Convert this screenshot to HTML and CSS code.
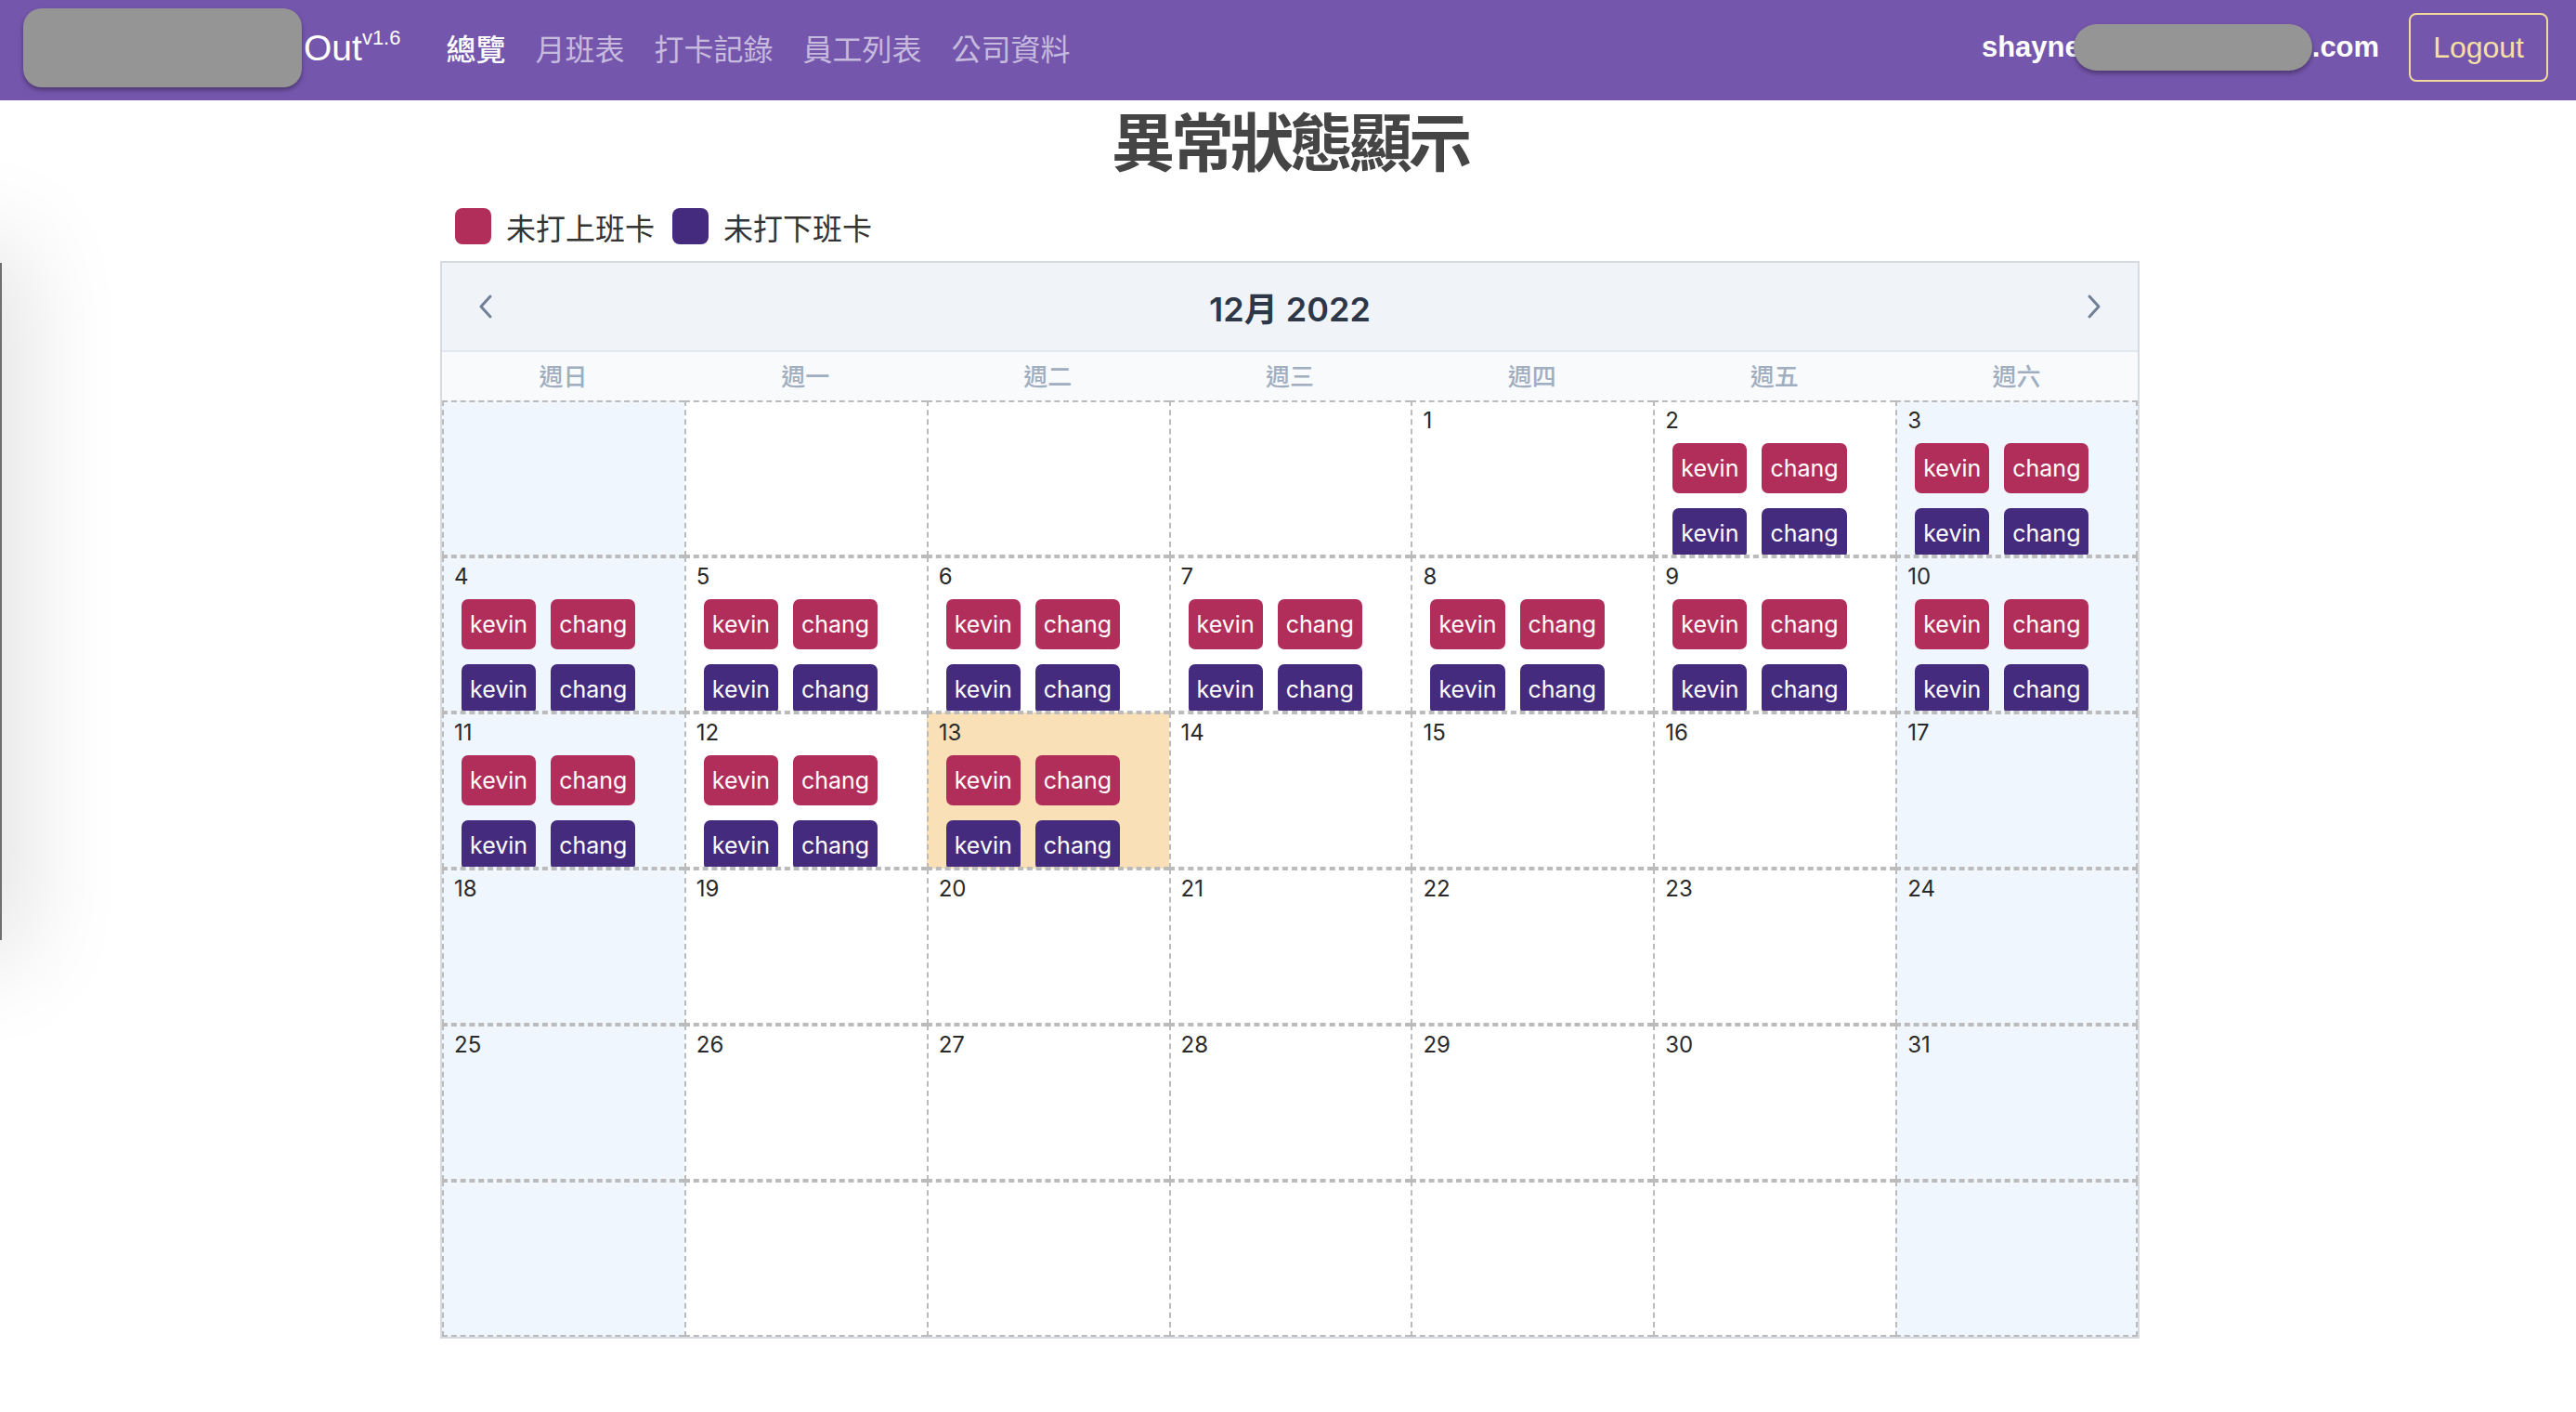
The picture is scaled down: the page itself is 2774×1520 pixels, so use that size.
FILE: index.html
```html
<!DOCTYPE html>
<html lang="zh-Hant">
<head>
<meta charset="utf-8">
<title>異常狀態顯示</title>
<link rel="stylesheet" href="styles.css">
</head>
<body>
<header class="navbar">
  <div class="brand">
    <span class="redact redact-logo"></span>
    <span class="brand-name">Out<span class="ver">v1.6</span></span>
  </div>
  <nav class="nav">
    <a class="nav-link active" href="#">總覽</a>
    <a class="nav-link" href="#">月班表</a>
    <a class="nav-link" href="#">打卡記錄</a>
    <a class="nav-link" href="#">員工列表</a>
    <a class="nav-link" href="#">公司資料</a>
  </nav>
  <div class="account">
    <span class="email">shayne<span class="redact redact-email"></span>.com</span>
    <button class="logout">Logout</button>
  </div>
</header>

<main class="page">
  <h1 class="title">異常狀態顯示</h1>
  <div class="legend">
    <span class="legend-swatch in"></span><span class="legend-label">未打上班卡</span>
    <span class="legend-swatch out"></span><span class="legend-label">未打下班卡</span>
  </div>

  <section class="calendar">
    <div class="cal-head">
      <button class="cal-nav" aria-label="prev"><svg width="18" height="28" viewBox="0 0 18 28"><polyline points="14,3 4,14 14,25" fill="none" stroke="#718096" stroke-width="3" stroke-linecap="round" stroke-linejoin="round"/></svg></button>
      <h2 class="cal-month">12月 2022</h2>
      <button class="cal-nav" aria-label="next"><svg width="18" height="28" viewBox="0 0 18 28"><polyline points="4,3 14,14 4,25" fill="none" stroke="#718096" stroke-width="3" stroke-linecap="round" stroke-linejoin="round"/></svg></button>
    </div>
    <div class="cal-weekdays">
      <div class="weekday">週日</div>
      <div class="weekday">週一</div>
      <div class="weekday">週二</div>
      <div class="weekday">週三</div>
      <div class="weekday">週四</div>
      <div class="weekday">週五</div>
      <div class="weekday">週六</div>
    </div>
    <div class="cal-grid">
      <!-- row 1 -->
      <div class="cell weekend"></div>
      <div class="cell"></div>
      <div class="cell"></div>
      <div class="cell"></div>
      <div class="cell"><div class="day">1</div></div>
      <div class="cell"><div class="day">2</div>
        <div class="chip-row"><span class="chip in">kevin</span><span class="chip in">chang</span></div>
        <div class="chip-row"><span class="chip out">kevin</span><span class="chip out">chang</span></div></div>
      <div class="cell weekend"><div class="day">3</div>
        <div class="chip-row"><span class="chip in">kevin</span><span class="chip in">chang</span></div>
        <div class="chip-row"><span class="chip out">kevin</span><span class="chip out">chang</span></div></div>
      <!-- row 2 -->
      <div class="cell weekend"><div class="day">4</div>
        <div class="chip-row"><span class="chip in">kevin</span><span class="chip in">chang</span></div>
        <div class="chip-row"><span class="chip out">kevin</span><span class="chip out">chang</span></div></div>
      <div class="cell"><div class="day">5</div>
        <div class="chip-row"><span class="chip in">kevin</span><span class="chip in">chang</span></div>
        <div class="chip-row"><span class="chip out">kevin</span><span class="chip out">chang</span></div></div>
      <div class="cell"><div class="day">6</div>
        <div class="chip-row"><span class="chip in">kevin</span><span class="chip in">chang</span></div>
        <div class="chip-row"><span class="chip out">kevin</span><span class="chip out">chang</span></div></div>
      <div class="cell"><div class="day">7</div>
        <div class="chip-row"><span class="chip in">kevin</span><span class="chip in">chang</span></div>
        <div class="chip-row"><span class="chip out">kevin</span><span class="chip out">chang</span></div></div>
      <div class="cell"><div class="day">8</div>
        <div class="chip-row"><span class="chip in">kevin</span><span class="chip in">chang</span></div>
        <div class="chip-row"><span class="chip out">kevin</span><span class="chip out">chang</span></div></div>
      <div class="cell"><div class="day">9</div>
        <div class="chip-row"><span class="chip in">kevin</span><span class="chip in">chang</span></div>
        <div class="chip-row"><span class="chip out">kevin</span><span class="chip out">chang</span></div></div>
      <div class="cell weekend"><div class="day">10</div>
        <div class="chip-row"><span class="chip in">kevin</span><span class="chip in">chang</span></div>
        <div class="chip-row"><span class="chip out">kevin</span><span class="chip out">chang</span></div></div>
      <!-- row 3 -->
      <div class="cell weekend"><div class="day">11</div>
        <div class="chip-row"><span class="chip in">kevin</span><span class="chip in">chang</span></div>
        <div class="chip-row"><span class="chip out">kevin</span><span class="chip out">chang</span></div></div>
      <div class="cell"><div class="day">12</div>
        <div class="chip-row"><span class="chip in">kevin</span><span class="chip in">chang</span></div>
        <div class="chip-row"><span class="chip out">kevin</span><span class="chip out">chang</span></div></div>
      <div class="cell today"><div class="day">13</div>
        <div class="chip-row"><span class="chip in">kevin</span><span class="chip in">chang</span></div>
        <div class="chip-row"><span class="chip out">kevin</span><span class="chip out">chang</span></div></div>
      <div class="cell"><div class="day">14</div></div>
      <div class="cell"><div class="day">15</div></div>
      <div class="cell"><div class="day">16</div></div>
      <div class="cell weekend"><div class="day">17</div></div>
      <!-- row 4 -->
      <div class="cell weekend"><div class="day">18</div></div>
      <div class="cell"><div class="day">19</div></div>
      <div class="cell"><div class="day">20</div></div>
      <div class="cell"><div class="day">21</div></div>
      <div class="cell"><div class="day">22</div></div>
      <div class="cell"><div class="day">23</div></div>
      <div class="cell weekend"><div class="day">24</div></div>
      <!-- row 5 -->
      <div class="cell weekend"><div class="day">25</div></div>
      <div class="cell"><div class="day">26</div></div>
      <div class="cell"><div class="day">27</div></div>
      <div class="cell"><div class="day">28</div></div>
      <div class="cell"><div class="day">29</div></div>
      <div class="cell"><div class="day">30</div></div>
      <div class="cell weekend"><div class="day">31</div></div>
      <!-- row 6 -->
      <div class="cell weekend"></div>
      <div class="cell"></div>
      <div class="cell"></div>
      <div class="cell"></div>
      <div class="cell"></div>
      <div class="cell"></div>
      <div class="cell weekend"></div>
    </div>
  </section>
</main>

<div class="drawer-edge"></div>
</body>
</html>
```

FILE: styles.css
```css
* { box-sizing: border-box; }

body {
  margin: 0;
  background: #ffffff;
  font-family: "Inter", "Noto Sans CJK TC", sans-serif;
  color: #333333;
}

/* ---------- navbar ---------- */
.navbar {
  height: 108px;
  background: #7556ad;
  display: flex;
  align-items: center;
  padding: 0 30px 6px 25px;
  font-family: "Liberation Sans", "Noto Sans CJK TC", sans-serif;
}

.brand {
  display: flex;
  align-items: center;
}

.redact {
  display: inline-block;
  background: #959595;
  box-shadow: 0 3px 5px rgba(0, 0, 0, 0.35);
}

.redact-logo {
  width: 300px;
  height: 85px;
  border-radius: 20px;
  margin-top: 1px;
}

.brand-name {
  color: #ffffff;
  font-size: 39px;
  margin-left: 2px;
}

.ver {
  font-size: 22px;
  vertical-align: 17px;
}

.nav {
  display: flex;
  gap: 32px;
  margin-left: 49px;
}

.nav-link {
  font-size: 32px;
  color: rgba(255, 255, 255, 0.6);
  text-decoration: none;
}

.nav-link.active {
  color: #ffffff;
  font-weight: 500;
}

.account {
  margin-left: auto;
  display: flex;
  align-items: center;
  gap: 32px;
}

.email {
  display: flex;
  align-items: center;
  color: #ffffff;
  font-size: 31px;
  font-weight: 700;
}

.redact-email {
  width: 257px;
  height: 50px;
  border-radius: 25px;
  margin-left: -8px;
}

.logout {
  height: 74px;
  padding: 0 24px;
  border: 2px solid #f1d99b;
  border-radius: 8px;
  background: transparent;
  color: #f7e0a3;
  font-family: "Liberation Sans", sans-serif;
  font-size: 32px;
}

/* ---------- page ---------- */
.page {
  width: 1830px;
  margin: 0 0 0 calc(50% - 913px);
}

.title {
  margin: 4px 0 0;
  text-align: center;
  font-family: "Noto Sans CJK TC", sans-serif;
  font-size: 68px;
  line-height: 76px;
  letter-spacing: -4px;
  font-weight: 700;
  color: #454545;
}

.legend {
  display: flex;
  align-items: center;
  height: 39px;
  margin-top: 36px;
  padding-left: 16px;
  font-family: "Noto Sans CJK TC", sans-serif;
  font-size: 32px;
  color: #333333;
}

.legend-swatch {
  width: 39px;
  height: 39px;
  border-radius: 8px;
  margin-right: 16px;
}

.legend-label + .legend-swatch {
  margin-left: 19px;
}

.legend-swatch.in { background: #b22e5a; }
.legend-swatch.out { background: #452b7e; }

/* ---------- calendar ---------- */
.calendar {
  margin-top: 18px;
  border: 2px solid #d6dbe1;
}

.cal-head {
  height: 96px;
  display: flex;
  align-items: center;
  justify-content: space-between;
  padding: 0 32px;
  background: #f0f4f8;
  border-bottom: 2px solid #e2e8f0;
}

.cal-nav {
  display: flex;
  align-items: center;
  justify-content: center;
  width: 30px;
  height: 40px;
  padding: 0;
  border: none;
  background: transparent;
}

.cal-month {
  margin: 0;
  font-size: 36px;
  font-weight: 600;
  color: #2d3748;
}

.cal-weekdays {
  display: grid;
  grid-template-columns: repeat(7, 1fr);
  align-items: center;
  height: 52px;
  background: #f8fafc;
}

.weekday {
  text-align: center;
  font-family: "Noto Sans CJK TC", sans-serif;
  font-size: 26px;
  font-weight: 500;
  color: #a0aec0;
  margin-top: -3px;
}

.cal-grid {
  display: grid;
  grid-template-columns: repeat(7, 1fr);
  grid-auto-rows: 168px;
}

.cell {
  border-left: 2px dashed #bbbbbb;
  border-top: 2px dashed #bbbbbb;
  border-bottom: 2px dashed #bbbbbb;
  padding: 4px 11px 0;
  overflow: hidden;
  background: #ffffff;
}

.cell:nth-child(7n) {
  border-right: 2px dashed #bbbbbb;
}

.cell.weekend { background: #eff6fd; }
.cell.today { background: #fae0b6; }

.day {
  height: 32px;
  font-size: 24px;
  line-height: 32px;
  color: #2a2a2a;
}

.chip-row {
  display: flex;
}

.chip {
  height: 54px;
  margin: 8px;
  padding: 0 9px;
  border-radius: 7px;
  font-size: 25px;
  line-height: 54px;
  color: #ffffff;
  white-space: nowrap;
}

.chip.in { background: #b22e5a; }
.chip.out { background: #452b7e; }

/* off-canvas drawer edge overlaying the page */
.drawer-edge {
  position: fixed;
  left: -60px;
  top: 283px;
  width: 62px;
  height: 729px;
  background: #6f6f6f;
  box-shadow: 0 0 110px 20px rgba(0, 0, 0, 0.13);
}
```
